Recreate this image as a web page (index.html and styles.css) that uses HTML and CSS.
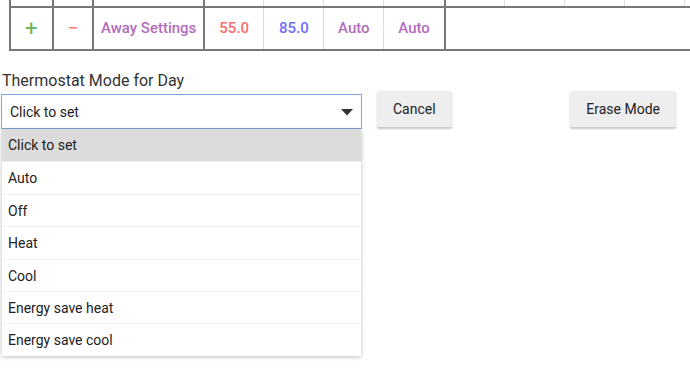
FILE: index.html
```html
<!DOCTYPE html>
<html lang="en">
<head>
    <meta charset="UTF-8" />
    <meta name="viewport" content="width=device-width, initial-scale=1.0"/>
    <title>Schedule - Thermostat</title>
    <link rel="stylesheet" href="styles.css">
</head>
<body>

<div class="schedule-wrap">
<table class="schedule">
    <colgroup>
        <col class="c-btn1">
        <col class="c-btn2">
        <col class="c-name">
        <col class="c-val"><col class="c-val"><col class="c-val"><col class="c-last">
        <col class="c-val"><col class="c-val"><col class="c-val"><col class="c-val"><col class="c-val">
    </colgroup>
    <tr class="cut">
        <td class="thick"></td><td class="thick"></td><td class="thick"></td>
        <td></td><td></td><td></td><td class="end"></td>
        <td></td><td></td><td></td><td></td><td></td>
    </tr>
    <tr class="row">
        <td class="thick add">+</td>
        <td class="thick remove">&minus;</td>
        <td class="thick name">Away Settings</td>
        <td class="heat">55.0</td>
        <td class="cool">85.0</td>
        <td class="mode">Auto</td>
        <td class="mode end">Auto</td>
        <td colspan="5"></td>
    </tr>
</table>
</div>

<div class="mode-form">
    <label class="field-label" for="modeSelect">Thermostat Mode for Day</label>
    <div class="form-row">
        <div class="select-wrap">
            <div class="select" id="modeSelect">
                <span>Click to set</span>
                <svg class="arrow" width="12" height="7" viewBox="0 0 12 7"><path d="M0 0h12L6 6.5z" fill="#333"/></svg>
            </div>
            <ul class="options">
                <li class="active">Click to set</li>
                <li>Auto</li>
                <li>Off</li>
                <li>Heat</li>
                <li>Cool</li>
                <li>Energy save heat</li>
                <li>Energy save cool</li>
            </ul>
        </div>
        <button class="btn">Cancel</button>
        <button class="btn erase">Erase Mode</button>
    </div>
</div>

</body>
</html>
```

FILE: styles.css
```css
* {
  margin: 0;
  padding: 0;
  box-sizing: border-box;
  font-family: 'Roboto', sans-serif;
}

html, body {
  overflow: hidden;
}

body {
  background: #fff;
  color: #222;
  width: 690px;
  height: 374px;
}

.schedule-wrap {
  width: 100%;
  overflow: hidden;
}

.schedule {
  border-collapse: collapse;
  table-layout: fixed;
  width: 736px;
  margin-left: 9px;
}

.c-btn1 { width: 42px; }
.c-btn2 { width: 40px; }
.c-name { width: 109px; }
.c-val { width: 59px; }
.c-last { width: 60px; }

.schedule td {
  border-left: 1px solid #dcdcdc;
  border-right: 1px solid #dcdcdc;
  text-align: center;
  font-size: 15px;
  font-weight: 500;
  padding: 0;
}

.schedule td.thick {
  border-left: 2px solid #777;
  border-right: 2px solid #777;
}

.schedule td.end {
  border-right: 2px solid #777;
}

.cut td {
  height: 7px;
}

.row td {
  height: 43px;
  padding-bottom: 1px;
  border-top: 2px solid #777;
  border-bottom: 2px solid #777;
}

.schedule td.add {
  color: #6cb55a;
  font-size: 22px;
  font-weight: 400;
}

.schedule td.remove {
  color: #ff7a7a;
  font-size: 20px;
  font-weight: 400;
}

.name { color: #b46cbd; }
.heat { color: #ff6b6b; }
.cool { color: #6f6cff; }
.mode { color: #b46cbd; }

.mode-form {
  padding: 21px 14px 0 1px;
}

.field-label {
  display: block;
  padding-left: 1px;
  font-size: 16px;
  line-height: 18px;
  color: #333;
}

.form-row {
  display: flex;
  align-items: flex-start;
  margin-top: 1px;
}

.select-wrap {
  position: relative;
  width: 361px;
  margin-top: 3px;
}

.select {
  height: 35px;
  border: 1px solid #7fa2d8;
  display: flex;
  align-items: center;
  justify-content: space-between;
  padding: 0 8px 0 8px;
  font-size: 14px;
  color: #222;
}

.arrow {
  margin-top: 1px;
}

.options {
  position: absolute;
  top: 100%;
  left: 1px;
  width: 359px;
  list-style: none;
  background: #fff;
  box-shadow: 0 1px 4px rgba(0, 0, 0, 0.28);
}

.options li {
  height: 32.4px;
  line-height: 32px;
  padding-left: 6px;
  font-size: 14px;
  color: #222;
  border-top: 1px solid #f0f0f0;
}

.options li:first-child {
  border-top: none;
}

.options li.active {
  background: #dcdcdc;
}

.btn {
  height: 36px;
  padding: 0 16px;
  margin-left: 15px;
  background: #eeeeee;
  border: none;
  border-radius: 2px;
  font-size: 14px;
  color: #222;
  box-shadow: 0 2px 2px rgba(0, 0, 0, 0.22);
  cursor: pointer;
}

.erase {
  margin-left: auto;
}
```
